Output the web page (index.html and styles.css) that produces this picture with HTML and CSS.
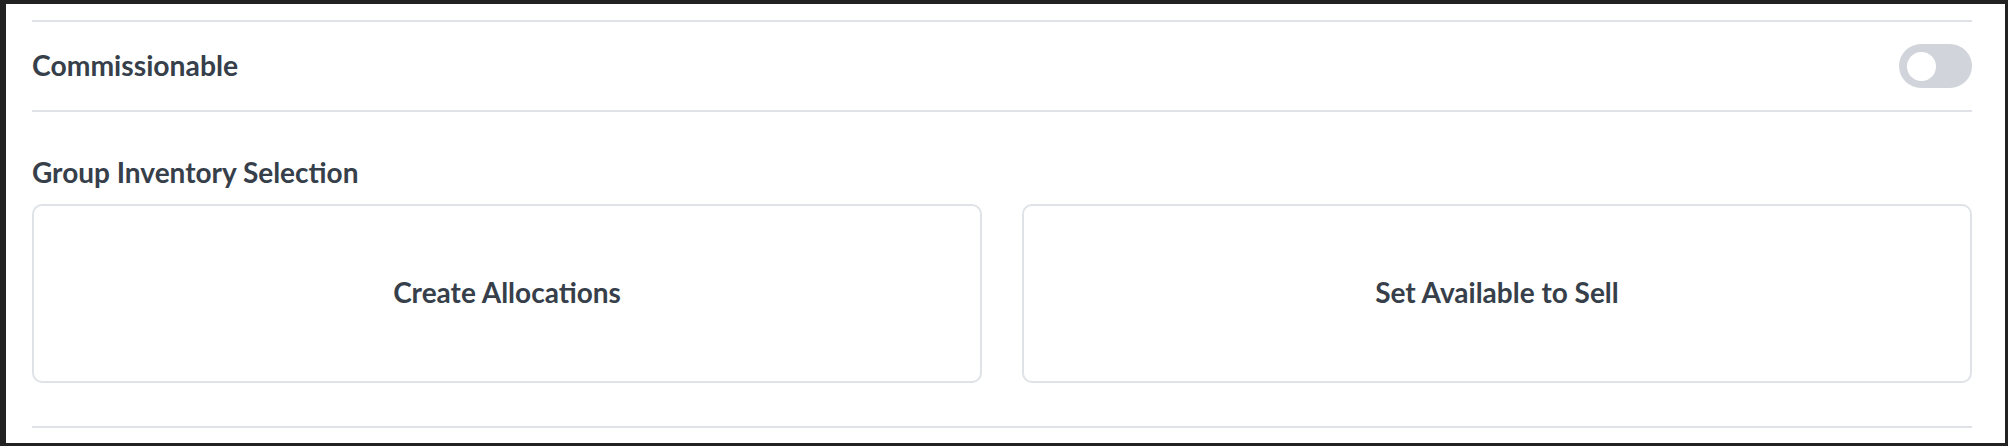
FILE: index.html
```html
<!DOCTYPE html>
<html lang="en">
<head>
    <meta charset="UTF-8">
    <meta name="viewport" content="width=device-width, initial-scale=1.0">
    <title>Group Settings</title>
    <link rel="stylesheet" href="styles.css">
</head>
<body>
    <div class="panel">
        <hr class="divider">

        <div class="setting-row">
            <span class="setting-label">Commissionable</span>
            <button type="button" class="toggle" aria-pressed="false">
                <span class="toggle-knob"></span>
            </button>
        </div>

        <hr class="divider">

        <section class="inventory">
            <h2 class="section-title">Group Inventory Selection</h2>
            <div class="option-grid">
                <button type="button" class="option-card">Create Allocations</button>
                <button type="button" class="option-card">Set Available to Sell</button>
            </div>
        </section>

        <hr class="divider divider-bottom">
    </div>
</body>
</html>
```

FILE: styles.css
```css
html, body {
    height: 100%;
}
body {
    margin: 0;
    background: #222222;
    font-family: Lato, "Open Sans", Arial, sans-serif;
    color: #363f4a;
}
.panel {
    box-sizing: border-box;
    height: 439px;
    margin: 4px 3px 0 6px;
    padding: 16px 33px 0 26px;
    background: #ffffff;
}
.divider {
    height: 2px;
    margin: 0;
    border: 0;
    background: #dfe3e8;
}
.setting-row {
    display: flex;
    align-items: center;
    justify-content: space-between;
    height: 88px;
}
.setting-label {
    font-size: 28.3px;
    font-weight: 700;
    line-height: 34px;
    margin-top: -3px;
}
.toggle {
    display: flex;
    align-items: center;
    width: 73px;
    height: 44px;
    padding: 0 0 0 8px;
    border: 0;
    border-radius: 22px;
    background: #d1d5db;
    cursor: pointer;
}
.toggle-knob {
    width: 29px;
    height: 29px;
    border-radius: 50%;
    background: #ffffff;
}
.section-title {
    margin: 43px 0 15px;
    font-size: 28px;
    font-weight: 700;
    line-height: 34px;
}
.option-grid {
    display: grid;
    grid-template-columns: 1fr 1fr;
    gap: 40px;
}
.option-card {
    height: 179px;
    padding: 0 0 3px;
    border: 2px solid #dfe3e8;
    border-radius: 10px;
    background: #ffffff;
    font-family: inherit;
    font-size: 28px;
    font-weight: 700;
    color: #363f4a;
    cursor: pointer;
}
.divider-bottom {
    margin-top: 43px;
}
```
